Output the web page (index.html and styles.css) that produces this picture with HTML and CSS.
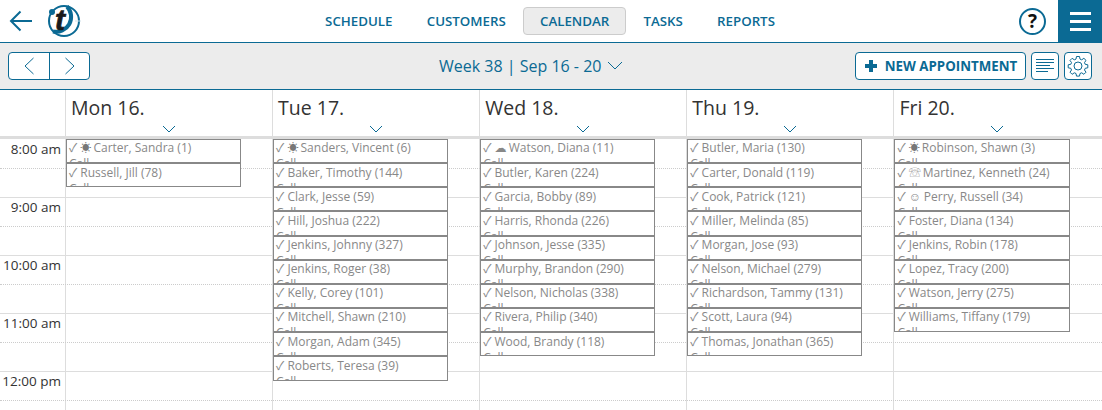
FILE: index.html
```html
<!DOCTYPE html>
<html lang="en">
<head>
  <meta charset="UTF-8">
  <title>Calendar</title>
  <link rel="stylesheet" href="styles.css">
</head>
<body>

<header class="topbar">
  <svg class="back-icon" width="24" height="22" viewBox="0 0 24 22"><path d="M23 11H2M11.500 1.500L2 11l9.500 9.500" fill="none" stroke="#0b6a94" stroke-width="2"/></svg>
  <svg class="logo" width="34" height="34" viewBox="0 0 34 34">
    <circle cx="17" cy="17" r="15" fill="none" stroke="#0b6a94" stroke-width="2"/>
    <path d="M20 2.500A15 15 0 0 1 6 27.500" fill="none" stroke="#0b6a94" stroke-width="4"/>
    <path d="M28 17h6" stroke="#cfe0e8" stroke-width="1"/>
    <circle cx="5" cy="8" r="3" fill="#0b6a94"/>
    <text class="logo-letter" x="8" y="26">t</text>
  </svg>
  <nav class="nav">
    <a class="nav-link">Schedule</a>
    <a class="nav-link">Customers</a>
    <a class="nav-link active">Calendar</a>
    <a class="nav-link">Tasks</a>
    <a class="nav-link">Reports</a>
  </nav>
  <div class="help">?</div>
  <div class="menu-btn"><span></span><span></span><span></span></div>
</header>

<div class="toolbar">
  <div class="pager">
    <button class="pager-btn"><svg width="12" height="18" viewBox="0 0 12 18"><path d="M10.500 1L2 9l8.500 8" fill="none" stroke="#0b6a94"/></svg></button>
    <button class="pager-btn"><svg width="12" height="18" viewBox="0 0 12 18"><path d="M1.500 1L10 9l-8.500 8" fill="none" stroke="#0b6a94"/></svg></button>
  </div>
  <div class="week-label">
    <span>Week 38 | Sep 16 - 20</span>
    <svg width="16" height="9" viewBox="0 0 16 9"><path d="M1 1l7 7 7-7" fill="none" stroke="#0b6a94"/></svg>
  </div>
  <div class="actions">
    <button class="new-btn"><svg width="14" height="14" viewBox="0 0 14 14"><path d="M7 1v12M1 7h12" stroke="#0b6a94" stroke-width="4"/></svg>New Appointment</button>
    <button class="icon-btn"><svg width="20" height="16" viewBox="0 0 20 16"><path d="M1 1.500h18M1 4.500h18M1 7.500h14M1 10.500h18M1 13.500h12" stroke="#0b6a94"/></svg></button>
    <button class="icon-btn"><svg width="22" height="22" viewBox="0 0 22 22"><path d="M9.500 1.500h3l.5 2.600 1.700.7 2.200-1.500 2.100 2.100-1.500 2.200.7 1.700 2.600.5v3l-2.600.5-.7 1.700 1.500 2.200-2.100 2.100-2.200-1.500-1.700.7-.5 2.600h-3l-.5-2.600-1.700-.7-2.200 1.500-2.100-2.100 1.500-2.200-.7-1.700-2.600-.5v-3l2.600-.5.7-1.700-1.500-2.200 2.100-2.100 2.200 1.500 1.700-.7z" fill="none" stroke="#0b6a94"/><circle cx="11" cy="11" r="4" fill="none" stroke="#0b6a94"/></svg></button>
  </div>
</div>

<div class="day-heads">
  <div class="day-corner"></div>
  <div class="day-head">Mon 16.<svg class="day-caret" width="14" height="8" viewBox="0 0 14 8"><path d="M1 1l6 6 6-6" fill="none" stroke="#0b6a94"/></svg></div>
  <div class="day-head">Tue 17.<svg class="day-caret" width="14" height="8" viewBox="0 0 14 8"><path d="M1 1l6 6 6-6" fill="none" stroke="#0b6a94"/></svg></div>
  <div class="day-head">Wed 18.<svg class="day-caret" width="14" height="8" viewBox="0 0 14 8"><path d="M1 1l6 6 6-6" fill="none" stroke="#0b6a94"/></svg></div>
  <div class="day-head">Thu 19.<svg class="day-caret" width="14" height="8" viewBox="0 0 14 8"><path d="M1 1l6 6 6-6" fill="none" stroke="#0b6a94"/></svg></div>
  <div class="day-head">Fri 20.<svg class="day-caret" width="14" height="8" viewBox="0 0 14 8"><path d="M1 1l6 6 6-6" fill="none" stroke="#0b6a94"/></svg></div>
</div>

<div class="grid">
  <div class="times">
    <div class="hour">8:00 am</div>
    <div class="hour">9:00 am</div>
    <div class="hour">10:00 am</div>
    <div class="hour">11:00 am</div>
    <div class="hour">12:00 pm</div>
  </div>

  <div class="day">
    <div class="appt">✓ <span class="mark sun">☀</span> Carter, Sandra (1)<br>Call</div>
    <div class="appt">✓ Russell, Jill (78)<br>Call</div>
  </div>

  <div class="day">
    <div class="appt">✓ <span class="mark sun">☀</span> Sanders, Vincent (6)<br>Call</div>
    <div class="appt">✓ Baker, Timothy (144)<br>Call</div>
    <div class="appt">✓ Clark, Jesse (59)<br>Call</div>
    <div class="appt">✓ Hill, Joshua (222)<br>Call</div>
    <div class="appt">✓ Jenkins, Johnny (327)<br>Call</div>
    <div class="appt">✓ Jenkins, Roger (38)<br>Call</div>
    <div class="appt">✓ Kelly, Corey (101)<br>Call</div>
    <div class="appt">✓ Mitchell, Shawn (210)<br>Call</div>
    <div class="appt">✓ Morgan, Adam (345)<br>Call</div>
    <div class="appt">✓ Roberts, Teresa (39)<br>Call</div>
  </div>

  <div class="day">
    <div class="appt">✓ <span class="mark cloud">☁</span> Watson, Diana (11)<br>Call</div>
    <div class="appt">✓ Butler, Karen (224)<br>Call</div>
    <div class="appt">✓ Garcia, Bobby (89)<br>Call</div>
    <div class="appt">✓ Harris, Rhonda (226)<br>Call</div>
    <div class="appt">✓ Johnson, Jesse (335)<br>Call</div>
    <div class="appt">✓ Murphy, Brandon (290)<br>Call</div>
    <div class="appt">✓ Nelson, Nicholas (338)<br>Call</div>
    <div class="appt">✓ Rivera, Philip (340)<br>Call</div>
    <div class="appt">✓ Wood, Brandy (118)<br>Call</div>
  </div>

  <div class="day">
    <div class="appt">✓ Butler, Maria (130)<br>Call</div>
    <div class="appt">✓ Carter, Donald (119)<br>Call</div>
    <div class="appt">✓ Cook, Patrick (121)<br>Call</div>
    <div class="appt">✓ Miller, Melinda (85)<br>Call</div>
    <div class="appt">✓ Morgan, Jose (93)<br>Call</div>
    <div class="appt">✓ Nelson, Michael (279)<br>Call</div>
    <div class="appt">✓ Richardson, Tammy (131)<br>Call</div>
    <div class="appt">✓ Scott, Laura (94)<br>Call</div>
    <div class="appt">✓ Thomas, Jonathan (365)<br>Call</div>
  </div>

  <div class="day">
    <div class="appt">✓ <span class="mark sun">☀</span> Robinson, Shawn (3)<br>Call</div>
    <div class="appt">✓ <span class="mark">☏</span> Martinez, Kenneth (24)<br>Call</div>
    <div class="appt">✓ <span class="mark smile">☺</span> Perry, Russell (34)<br>Call</div>
    <div class="appt">✓ Foster, Diana (134)<br>Call</div>
    <div class="appt">✓ Jenkins, Robin (178)<br>Call</div>
    <div class="appt">✓ Lopez, Tracy (200)<br>Call</div>
    <div class="appt">✓ Watson, Jerry (275)<br>Call</div>
    <div class="appt">✓ Williams, Tiffany (179)<br>Call</div>
  </div>
</div>

</body>
</html>
```

FILE: styles.css
```css
* {
  box-sizing: border-box;
}

html, body {
  height: 100%;
}

body {
  margin: 0;
  overflow: hidden;
  font-family: "Open Sans", "DejaVu Sans", sans-serif;
  color: #333;
  background: #fff;
}

button {
  font-family: inherit;
  background: #fff;
  border: 1px solid #0b6a94;
  border-radius: 4px;
  padding: 0;
  display: flex;
  align-items: center;
  justify-content: center;
}

.topbar {
  height: 43px;
  display: flex;
  align-items: center;
  border-bottom: 1px solid #0b6a94;
}

.back-icon {
  margin-left: 9px;
  flex: none;
}

.logo {
  margin-left: 14px;
  flex: none;
}

.logo-letter {
  font-family: "Liberation Sans", sans-serif;
  font-size: 30px;
  font-weight: 700;
  font-style: italic;
  fill: #1a1a1a;
  stroke: #1a1a1a;
  stroke-width: 0.7px;
}

.nav {
  display: flex;
  align-items: center;
  margin-left: 227px;
}

.nav-link {
  font-size: 13.300px;
  font-weight: 600;
  text-transform: uppercase;
  color: #0b6a94;
  padding: 0 16.100px;
  height: 28px;
  line-height: 26px;
  border: 1px solid transparent;
  border-radius: 4px;
}

.nav-link.active {
  background: #ececec;
  border-color: #ccc;
}

.help {
  margin-left: auto;
  margin-right: 12px;
  width: 27px;
  height: 27px;
  border: 2px solid #0b6a94;
  border-radius: 50%;
  text-align: center;
  font-size: 19px;
  font-weight: 700;
  line-height: 23px;
  color: #111;
}

.menu-btn {
  width: 44px;
  height: 42px;
  background: #0b6a94;
  display: flex;
  flex-direction: column;
  justify-content: center;
  align-items: center;
  gap: 5px;
}

.menu-btn span {
  width: 21px;
  height: 3px;
  background: #fff;
}

.toolbar {
  height: 47px;
  display: flex;
  align-items: center;
  padding: 0 10px 1px 8px;
  background: #ececec;
  border-bottom: 1px solid #0b6a94;
}

.pager {
  display: flex;
  background: #fff;
  border: 1px solid #0b6a94;
  border-radius: 4px;
  height: 28px;
}

.pager-btn {
  width: 40px;
  border: none;
  background: none;
}

.pager-btn + .pager-btn {
  border-left: 1px solid #0b6a94;
  border-radius: 0;
}

.week-label {
  margin-left: 349px;
  font-size: 16px;
  color: #0b6a94;
  display: flex;
  align-items: center;
  gap: 6px;
}

.actions {
  display: flex;
  gap: 5px;
  margin-left: auto;
}

.new-btn {
  height: 28px;
  width: 171px;
  gap: 7px;
  font-size: 13.300px;
  font-weight: 700;
  text-transform: uppercase;
  color: #0b6a94;
}

.icon-btn {
  width: 28px;
  height: 28px;
}

.day-heads {
  height: 49px;
  display: grid;
  grid-template-columns: 65px repeat(5, 207.100px);
  border-bottom: 3px solid #ddd;
}

.day-head {
  position: relative;
  border-left: 1px solid #ddd;
  padding: 4px 0 0 5px;
  font-size: 19.500px;
  line-height: 28px;
  color: #333;
}

.day-caret {
  position: absolute;
  left: 96px;
  bottom: 3px;
}

.grid {
  display: grid;
  grid-template-columns: 65px repeat(5, 207.100px);
  height: 271px;
  overflow: hidden;
}

.times {
  display: flex;
  flex-direction: column;
}

.hour {
  position: relative;
  height: 58px;
  flex: none;
  padding-right: 4px;
  text-align: right;
  font-size: 13.500px;
  line-height: 20px;
  color: #333;
}

/* half hour and full hour lines run across all the day columns */
.hour::before,
.hour::after {
  content: "";
  position: absolute;
  left: 0;
  width: 1102px;
}

.hour::before {
  top: 29px;
  border-top: 1px dotted #ccc;
}

.hour::after {
  top: 58px;
  border-top: 1px solid #ddd;
}

.day {
  border-left: 1px solid #ddd;
}

.appt {
  position: relative;
  width: 175.150px;
  height: 24.170px;
  overflow: hidden;
  background: #fff;
  border: 1px solid #888;
  padding: 0.400px 2px 0;
  font-family: "Open Sans", "Noto Sans CJK JP", sans-serif;
  font-size: 12px;
  line-height: 16px;
  color: #888;
  white-space: nowrap;
}

.mark {
  display: inline-block;
  width: 11px;
  text-align: center;
}

.sun {
  width: 10px;
  font-size: 11px;
  color: #777;
}

.cloud {
  font-family: "DejaVu Sans", sans-serif;
}

.smile {
  width: 12px;
}
```
